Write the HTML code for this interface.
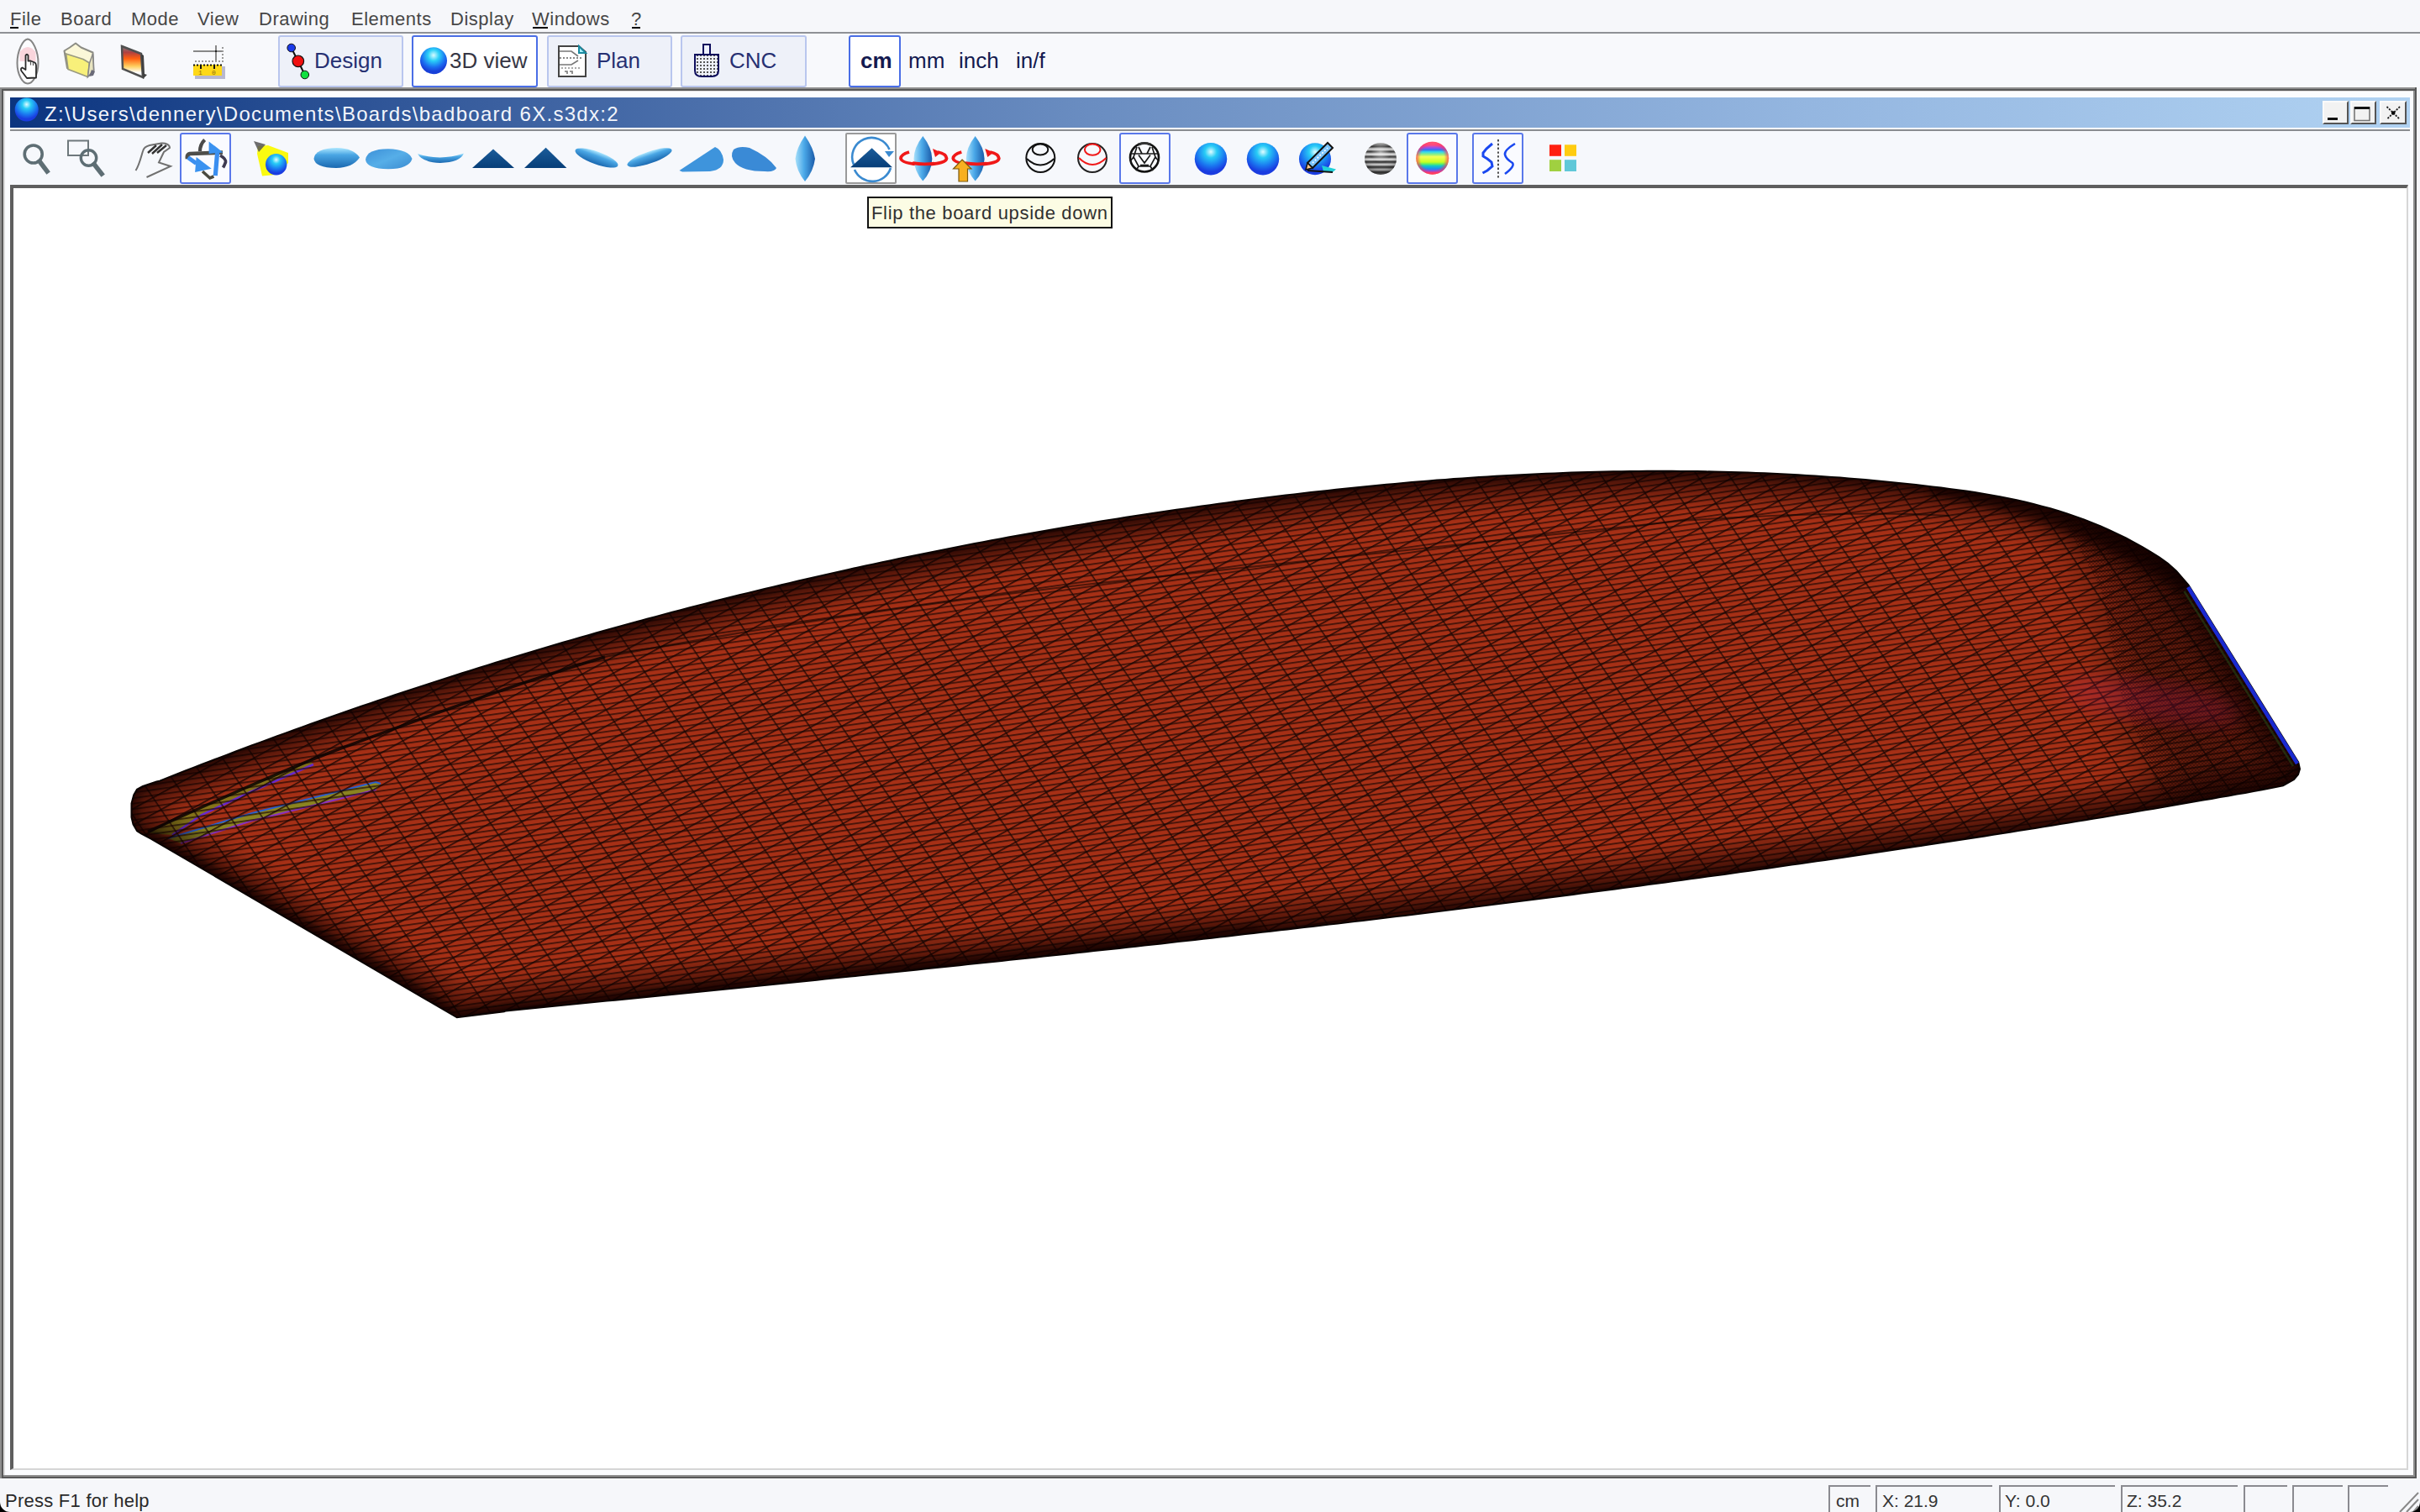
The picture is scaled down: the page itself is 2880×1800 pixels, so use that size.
<!DOCTYPE html>
<html><head><meta charset="utf-8">
<style>
*{margin:0;padding:0;box-sizing:border-box}
html,body{width:2880px;height:1800px;overflow:hidden;background:#f6f7fa;font-family:"Liberation Sans",sans-serif}
.a{position:absolute}
.t{position:absolute;white-space:pre;line-height:1}
.mi{font-size:22px;color:#464646;top:12px;letter-spacing:0.5px}
.tb{font-size:26px;top:59px}
.btn{position:absolute;top:42px;height:62px;border:2px solid #b9c6ee;border-radius:3px;background:#eef1f9}
.btn.sel{border-color:#4a6ee6;background:#fff}
.ib{position:absolute;top:158px;width:61px;height:61px;border:2px solid #5a78ea;border-radius:3px;background:#fafbff}
svg{position:absolute;overflow:visible}
</style></head>
<body>
<!-- MENU BAR -->
<div class="a" style="left:0;top:0;width:2880px;height:38px;background:#f6f7fa"></div>
<div class="a" style="left:0;top:38px;width:2880px;height:2px;background:#8f9196"></div>
<div class="t mi" style="left:12px">File</div>
<div class="a" style="left:12px;top:32px;width:10px;height:2px;background:#000"></div>
<div class="t mi" style="left:72px">Board</div>
<div class="t mi" style="left:156px">Mode</div>
<div class="t mi" style="left:235px">View</div>
<div class="t mi" style="left:308px">Drawing</div>
<div class="t mi" style="left:418px">Elements</div>
<div class="t mi" style="left:536px">Display</div>
<div class="t mi" style="left:633px">Windows</div>
<div class="a" style="left:634px;top:32px;width:18px;height:2px;background:#000"></div>
<div class="t mi" style="left:751px">?</div>
<div class="a" style="left:752px;top:32px;width:10px;height:2px;background:#000"></div>

<!-- TOOLBAR 1 -->
<div class="a" style="left:0;top:40px;width:2880px;height:64px;background:#f8f9fc"></div>

<div class="btn" style="left:331px;width:149px"></div>
<div class="btn sel" style="left:490px;width:150px"></div>
<div class="btn" style="left:651px;width:149px"></div>
<div class="btn" style="left:810px;width:150px"></div>
<div class="btn sel" style="left:1010px;width:62px"></div>

<div class="t tb" style="left:374px;color:#263072">Design</div>
<div class="t tb" style="left:535px;color:#363644">3D view</div>
<div class="t tb" style="left:710px;color:#263072">Plan</div>
<div class="t tb" style="left:868px;color:#263072">CNC</div>
<div class="t tb" style="left:1024px;color:#141a50;font-weight:bold">cm</div>
<div class="t tb" style="left:1081px;color:#141a50">mm</div>
<div class="t tb" style="left:1141px;color:#141a50">inch</div>
<div class="t tb" style="left:1209px;color:#141a50">in/f</div>

<!-- TOOLBAR 1 ICONS -->
<svg style="left:0;top:0" width="1300" height="110" viewBox="0 0 1300 110">
  <defs>
    <radialGradient id="sph" cx="0.5" cy="0.3" r="0.6">
      <stop offset="0" stop-color="#d8fbff"/>
      <stop offset="0.35" stop-color="#2ad0f8"/>
      <stop offset="0.75" stop-color="#1a6cf0"/>
      <stop offset="1" stop-color="#1840d8"/>
    </radialGradient>
    <linearGradient id="fire" x1="0" y1="0" x2="0" y2="1">
      <stop offset="0" stop-color="#808080"/>
      <stop offset="0.2" stop-color="#b04040"/>
      <stop offset="0.4" stop-color="#ff6010"/>
      <stop offset="0.65" stop-color="#ffd060"/>
      <stop offset="0.85" stop-color="#ffffff"/>
      <stop offset="1" stop-color="#e0e0e0"/>
    </linearGradient>
    <pattern id="dots4" width="4" height="4" patternUnits="userSpaceOnUse">
      <rect x="1" y="1" width="2" height="2" fill="#555"/>
    </pattern>
  </defs>
  <!-- surfboard with hand -->
  <path d="M33 46.5 C38.5 47 45.5 60 45.5 75 C45.5 89 39 99.5 33 99.5 C27 99.5 20.5 89 20.5 75 C20.5 60 27.5 47 33 46.5 Z" fill="#fcfcfe" stroke="#858585" stroke-width="2"/>
  <path d="M23.5 62 Q33 50 42.5 62 L42.5 73 L23.5 73 Z" fill="#f8c8d0" opacity="0.75"/>
  <path d="M30.5 66 Q32 63.5 33.5 66 L33.5 72.5 L36.5 72.5 L39 73.5 L41.5 74.5 Q43 76 43 78 L43 92.5 L32 93 L25.5 84.5 Q24 81.5 26.5 80.5 L30.5 83 Z" fill="#fff" stroke="#2a2a2a" stroke-width="1.8" stroke-linejoin="round"/>
  <path d="M36.5 77.5 L36.5 73 M39.5 78 L39.5 74" stroke="#555" stroke-width="1.2"/>
  <!-- folder -->
  <path d="M76.5 60.5 L83 56.5 L90 51.5 L96.5 56.5 L110.5 62.5 L111.5 84 L105 90 L80 81 Z" fill="#fbf7d8" stroke="#8c8c84" stroke-width="2" stroke-linejoin="round"/>
  <path d="M78.5 64 L99 70.5 L106.5 75 L104.5 91.5 L81 82.5 Z" fill="#f8f07a" stroke="#9a9a80" stroke-width="1.8" stroke-linejoin="round"/>
  <path d="M106.5 75 L110.5 64 L111.5 84 L104.5 91.5 Z" fill="#e8e4c0" stroke="#888" stroke-width="1.5"/>
  <path d="M109 83 L113 85 L111 90 L106 91" fill="#6a6a78"/>
  <!-- save -->
  <path d="M145 55 L168 64 L170 92 L146 82 Z" fill="url(#fire)" stroke="#505050" stroke-width="2.5"/>
  <path d="M168 64 L171 66 L172 88 L175 89 L170 94 Z" fill="#404040"/>
  <!-- ruler -->
  <line x1="230" y1="61" x2="266" y2="61" stroke="#888" stroke-width="2"/>
  <line x1="257" y1="54" x2="257" y2="74" stroke="#888" stroke-width="2"/>
  <rect x="256" y="60" width="2" height="2" fill="#222"/>
  <line x1="232" y1="73" x2="266" y2="73" stroke="#999" stroke-width="2" stroke-dasharray="2 2"/>
  <line x1="265" y1="56" x2="265" y2="73" stroke="#999" stroke-width="2" stroke-dasharray="2 2"/>
  <rect x="232" y="79" width="36" height="15" fill="#b8b8d0"/>
  <rect x="230" y="77" width="34" height="13" fill="#ffd818"/>
  <line x1="230" y1="77.5" x2="265" y2="77.5" stroke="#111" stroke-width="2" stroke-dasharray="2 2"/>
  <rect x="238" y="77" width="2" height="5" fill="#111"/>
  <rect x="254" y="77" width="2" height="5" fill="#111"/>
  <text x="236" y="89" font-size="8" fill="#8a6a10" font-family="Liberation Mono">1</text>
  <text x="252" y="89" font-size="8" fill="#8a6a10" font-family="Liberation Mono">0</text>
  <!-- design -->
  <line x1="346.7" y1="57" x2="362.8" y2="89" stroke="#111" stroke-width="2"/>
  <circle cx="346.7" cy="57" r="4.8" fill="#1a3ae8" stroke="#111" stroke-width="1"/>
  <circle cx="354.8" cy="72.8" r="6.8" fill="#f01010" stroke="#111" stroke-width="1.2"/>
  <circle cx="362.8" cy="89" r="4.8" fill="#10e040" stroke="#111" stroke-width="1"/>
  <!-- 3d sphere -->
  <circle cx="516" cy="72.2" r="16" fill="url(#sph)"/>
  <!-- plan doc -->
  <path d="M665 55 L689 55 L697 62 L697 91 L665 91 Z" fill="#fff" stroke="#444" stroke-width="2"/>
  <path d="M689 55 L689 63 L697 63 Z" fill="#a8f0ff" stroke="#1a8aa0" stroke-width="2"/>
  <path d="M666 61 L680 61 L688 67 M666 77 L680 77 L688 72" fill="none" stroke="#777" stroke-width="1.6"/>
  <line x1="666" y1="69" x2="692" y2="69" stroke="#888" stroke-width="2" stroke-dasharray="2 2"/>
  <line x1="668" y1="81" x2="692" y2="81" stroke="#aaa" stroke-width="2" stroke-dasharray="2 2"/>
  <path d="M672 85 h3 v3 M678 85 h3 v3" fill="none" stroke="#777" stroke-width="1.6"/>
  <!-- cnc -->
  <rect x="837" y="53" width="8" height="12" fill="#eef2ff" stroke="#0c0c5c" stroke-width="2"/>
  <path d="M827 65 L855 65 L855 84 Q855 91 847 91 L835 91 Q827 91 827 84 Z" fill="url(#dots4)" stroke="#0c0c5c" stroke-width="2"/>
</svg>

<!-- OUTER FRAME -->
<div class="a" style="left:4px;top:108px;width:2868px;height:1648px;background:#fbfcfe;border-top:1px solid #e2e0e0;border-left:2px solid #dcdcdc"></div>
<div class="a" style="left:0;top:104px;width:2876px;height:2px;background:#8e8e8e"></div>
<div class="a" style="left:2px;top:106px;width:2872px;height:2px;background:#585858"></div>
<div class="a" style="left:0;top:104px;width:2px;height:1656px;background:#8e8e8e"></div>
<div class="a" style="left:2px;top:106px;width:2px;height:1652px;background:#585858"></div>
<div class="a" style="left:4px;top:1756px;width:2870px;height:2px;background:#8e8e8e"></div>
<div class="a" style="left:2px;top:1758px;width:2874px;height:2px;background:#585858"></div>
<div class="a" style="left:2872px;top:108px;width:2px;height:1650px;background:#8e8e8e"></div>
<div class="a" style="left:2874px;top:104px;width:2px;height:1656px;background:#585858"></div>

<!-- TITLE BAR -->
<div class="a" style="left:12px;top:116px;width:2856px;height:36px;background:linear-gradient(90deg,#0b347f 0%,#3a5f9f 20%,#6a8dc1 45%,#94b6e0 75%,#b0d2f2 100%)"></div>
<div class="a" style="left:12px;top:154px;width:2856px;height:2px;background:#8a8c90"></div>
<div class="t" id="title" style="left:53px;top:124px;font-size:24px;color:#f2f5fb;letter-spacing:1.3px">Z:\Users\dennery\Documents\Boards\badboard 6X.s3dx:2</div>


<!-- title buttons -->
<div class="a" style="left:2764px;top:120px;width:31px;height:28px;background:#f2f2f2;border:2px solid;border-color:#fafafa #555 #555 #fafafa"></div>
<div class="a" style="left:2797px;top:120px;width:31px;height:28px;background:#f2f2f2;border:2px solid;border-color:#fafafa #555 #555 #fafafa"></div>
<div class="a" style="left:2832px;top:120px;width:32px;height:28px;background:#f2f2f2;border:2px solid;border-color:#fafafa #555 #555 #fafafa"></div>
<svg style="left:0;top:0" width="2880" height="160" viewBox="0 0 2880 160">
  <rect x="2770" y="140" width="12" height="3" fill="#111"/>
  <rect x="2802" y="128" width="18" height="15.5" fill="none" stroke="#777" stroke-width="1.6"/>
  <rect x="2802" y="127" width="18" height="3" fill="#111"/>
  <path d="M2840.5 127 L2856 142 M2856 127 L2840.5 142" stroke="#222" stroke-width="1.8" stroke-dasharray="2.2 1.4"/><circle cx="2848.2" cy="134.5" r="2.2" fill="#000"/>
</svg>

<!-- TOOLBAR 2 -->
<div class="a" style="left:12px;top:156px;width:2856px;height:64px;background:#f6f8fc"></div>

<!-- selected/hover buttons -->
<div class="ib" style="left:214px"></div>
<div class="a" style="left:1006px;top:158px;width:61px;height:61px;border:2px solid #9a9a9a;border-radius:2px;background:#fff"></div>
<div class="ib" style="left:1332px"></div>
<div class="ib" style="left:1674px"></div>
<div class="ib" style="left:1752px"></div>

<!-- TOOLBAR 2 ICONS -->
<svg style="left:0;top:0" width="1900" height="230" viewBox="0 0 1900 230">
  <defs>
    <linearGradient id="lensg" x1="0" y1="0" x2="1" y2="0">
      <stop offset="0" stop-color="#a8e0fa"/>
      <stop offset="0.45" stop-color="#4aa8e8"/>
      <stop offset="1" stop-color="#1a5aa8"/>
    </linearGradient>
    <linearGradient id="ellg" x1="0" y1="0" x2="0" y2="1">
      <stop offset="0" stop-color="#aee8ff"/>
      <stop offset="0.35" stop-color="#4aa6e4"/>
      <stop offset="1" stop-color="#1a68b0"/>
    </linearGradient>
    <linearGradient id="ellg2" x1="0" y1="0" x2="1" y2="1">
      <stop offset="0" stop-color="#3c90d8"/>
      <stop offset="0.5" stop-color="#56aee8"/>
      <stop offset="1" stop-color="#3a8ad0"/>
    </linearGradient>
    <linearGradient id="trig" x1="0" y1="0" x2="0" y2="1">
      <stop offset="0" stop-color="#1a5c9a"/>
      <stop offset="1" stop-color="#073e78"/>
    </linearGradient>
    <radialGradient id="sph2" cx="0.5" cy="0.28" r="0.62">
      <stop offset="0" stop-color="#e0fcff"/>
      <stop offset="0.3" stop-color="#28ccf6"/>
      <stop offset="0.7" stop-color="#1a78f0"/>
      <stop offset="1" stop-color="#1a3ce0"/>
    </radialGradient>
    <linearGradient id="rainbow" x1="0" y1="0" x2="0" y2="1">
      <stop offset="0" stop-color="#ff9090"/>
      <stop offset="0.1" stop-color="#ff5088"/>
      <stop offset="0.19" stop-color="#9050f0"/>
      <stop offset="0.25" stop-color="#3078f0"/>
      <stop offset="0.31" stop-color="#30d8f0"/>
      <stop offset="0.39" stop-color="#90f080"/>
      <stop offset="0.46" stop-color="#f4ff58"/>
      <stop offset="0.62" stop-color="#c8ff20"/>
      <stop offset="0.68" stop-color="#60f060"/>
      <stop offset="0.74" stop-color="#10c8c8"/>
      <stop offset="0.83" stop-color="#2088f0"/>
      <stop offset="0.9" stop-color="#8050f0"/>
      <stop offset="0.95" stop-color="#ff4070"/>
      <stop offset="1" stop-color="#ff5050"/>
    </linearGradient>
    <radialGradient id="rimred" cx="0.5" cy="0.5" r="0.5">
      <stop offset="0.72" stop-color="#ff3060" stop-opacity="0"/>
      <stop offset="0.92" stop-color="#ff3060" stop-opacity="0.55"/>
      <stop offset="1" stop-color="#ff4060" stop-opacity="0.8"/>
    </radialGradient>
    <radialGradient id="shade3d" cx="0.5" cy="0.3" r="0.7">
      <stop offset="0" stop-color="#fff" stop-opacity="0.55"/>
      <stop offset="0.45" stop-color="#fff" stop-opacity="0"/>
      <stop offset="0.8" stop-color="#000" stop-opacity="0.15"/>
      <stop offset="1" stop-color="#000" stop-opacity="0.4"/>
    </radialGradient>
    <linearGradient id="stripes" x1="0" y1="0" x2="0" y2="1">
      <stop offset="0" stop-color="#bbb"/><stop offset="0.12" stop-color="#333"/>
      <stop offset="0.2" stop-color="#ddd"/><stop offset="0.28" stop-color="#333"/>
      <stop offset="0.36" stop-color="#eee"/><stop offset="0.44" stop-color="#333"/>
      <stop offset="0.52" stop-color="#eee"/><stop offset="0.6" stop-color="#222"/>
      <stop offset="0.68" stop-color="#ddd"/><stop offset="0.76" stop-color="#222"/>
      <stop offset="0.84" stop-color="#ccc"/><stop offset="0.92" stop-color="#333"/>
      <stop offset="1" stop-color="#999"/>
    </linearGradient>
  </defs>
  <!-- title sphere -->
  <circle cx="31.7" cy="130.5" r="14" fill="url(#sph2)"/>
  <!-- magnifier -->
  <circle cx="39.7" cy="183.5" r="10.5" fill="none" stroke="#5e6e74" stroke-width="3.6"/>
  <line x1="47" y1="192" x2="56" y2="204" stroke="#5e6e74" stroke-width="5.5" stroke-linecap="square"/>
  <!-- zoom box -->
  <rect x="81" y="167.5" width="24" height="17.5" fill="none" stroke="#6e787c" stroke-width="2"/>
  <circle cx="105.5" cy="188" r="9.2" fill="none" stroke="#5e6e74" stroke-width="3.4"/>
  <line x1="112" y1="195.5" x2="121" y2="207" stroke="#5e6e74" stroke-width="5.5" stroke-linecap="square"/>
  <!-- hand -->
  <path d="M161.5 203 C166 196 168 186 170 180 C171 176 174 174 178 173 L192 170.5 C197 170 202 172 202 176 L195 181 L189 193.5 L203 198 L174.5 211" fill="none" stroke="#707070" stroke-width="2"/>
  <path d="M176 182 L186 173 M181 183 L193 172 M187 182 L198 173" stroke="#333" stroke-width="2.4"/>
  <!-- rotate icon -->
  <path d="M243.6 166.5 Q238 172 238 180" fill="none" stroke="#4a4a4a" stroke-width="4.2"/>
  <path d="M223 189 Q222 184 226 183 L265 181.5" fill="none" stroke="#4e4e4a" stroke-width="4.6"/>
  <path d="M262 185 Q269 189 268.5 193 Q267 197 265.5 199.5" fill="none" stroke="#3e3a50" stroke-width="3.6"/>
  <path d="M241 204 L249.8 212 L254.4 210" fill="none" stroke="#4a4a40" stroke-width="3.6"/>
  <path d="M223.7 187.5 L233.6 194.5" stroke="#3a8ef0" stroke-width="5"/>
  <path d="M233.6 186.9 L251.7 200.7 L232.1 204.9 Z" fill="#3a92f0"/>
  <path d="M256.3 209.1 L258.6 181.5" stroke="#3a8ef0" stroke-width="5.2"/>
  <path d="M248.6 168.4 L265.5 181.5 L248.6 183 Z" fill="#3a92f0"/>
  <!-- light -->
  <path d="M307 174 L319 173 L343 182 L343 194 L328 208 L312 209.5 L306 183 Z" fill="#fafa10"/>
  <path d="M302 168 L316 172 L308 181 Z" fill="#555" opacity="0.85"/>
  <circle cx="328.7" cy="195.8" r="12.7" fill="url(#sph2)"/>
  <!-- ellipses -->
  <path d="M373.5 189 Q375 176.5 401 176 Q421 176.5 428 187.5 Q420 199.5 400 200 Q375 199.5 373.5 189 Z" fill="url(#ellg)"/>
  <path d="M435 190 Q436.5 177.5 462 177.3 Q486 177.8 490.5 189 Q487 201 462 201.3 Q436.5 201 435 190 Z" fill="url(#ellg2)"/>
  <path d="M497 183 Q524 192 552 182.5 Q548 193 524 194 Q502 193 497 183 Z" fill="url(#ellg)"/>
  <path d="M562 200 L587 177.5 L612 200 Z" fill="url(#trig)"/>
  <path d="M624 200 L649.6 175.8 L674.4 200 Z" fill="url(#trig)"/>
  <ellipse cx="710" cy="188" rx="27" ry="7.5" transform="rotate(20 710 188)" fill="url(#ellg)"/>
  <ellipse cx="773" cy="187.5" rx="28" ry="7" transform="rotate(-19 773 187.5)" fill="url(#ellg)"/>
  <path d="M808.5 203 L851 175 Q859 178 861 190 Q861 202 845 204 L812 204.5 Z" fill="#3e94dc"/>
  <path d="M873 178 Q880 173 892 176 Q914 186 924 200 Q922 205 910 204 Q884 204 875 194 Q868 186 873 178 Z" fill="#3a8ad6"/>
  <path d="M958 161.5 Q948 176 946.5 189 Q948 204 958 216 Q968 204 970 189 Q968 176 958 161.5 Z" fill="url(#lensg)"/>
  <!-- flip -->
  <path d="M1016 196 A23 23 0 1 1 1058.5 178" fill="none" stroke="#3a8ad0" stroke-width="2.6"/>
  <path d="M1053 180 L1064 180 L1058 187 Z" fill="#3a8ad0"/>
  <path d="M1060 200 A23 23 0 0 1 1017 202" fill="none" stroke="#3a8ad0" stroke-width="2.6"/>
  <path d="M1012 199.3 L1037.6 176.2 L1062 199.3 Z" fill="url(#trig)"/>
  <!-- rotate lenses -->
  <path d="M1082.0 181 Q1072.0 184 1072.0 188.5 Q1073.0 195 1099.0 196 Q1126.0 195 1126.5 188.5 Q1126.0 183 1116.0 181" fill="none" stroke="#f01818" stroke-width="3.8"/>
  <path d="M1110.0 177 L1120.0 181.5 L1113.0 187 Z" fill="#f01818"/>
  <path d="M1098.3 162 Q1087.5 176 1087.5 189 Q1088.0 204 1098.3 215.5 Q1109.0 204 1109.3 189 Q1109.0 176 1098.3 162 Z" fill="url(#lensg)"/>
  <path d="M1086.0 194.2 Q1099.0 196.3 1112.0 194.6" fill="none" stroke="#f01818" stroke-width="3.8"/>
  <path d="M1144.3 181 Q1134.3 184 1134.3 188.5 Q1135.3 195 1161.3 196 Q1188.3 195 1188.8 188.5 Q1188.3 183 1178.3 181" fill="none" stroke="#f01818" stroke-width="3.8"/>
  <path d="M1172.3 177 L1182.3 181.5 L1175.3 187 Z" fill="#f01818"/>
  <path d="M1160.6 162 Q1149.8 176 1149.8 189 Q1150.3 204 1160.6 215.5 Q1171.3 204 1171.6 189 Q1171.3 176 1160.6 162 Z" fill="url(#lensg)"/>
  <path d="M1148.3 194.2 Q1161.3 196.3 1174.3 194.6" fill="none" stroke="#f01818" stroke-width="3.8"/>
  <path d="M1145 190 L1156 201 L1151.5 201 L1151.5 216 L1141 216 L1141 201 L1134.5 201 Z" fill="#f8b020" stroke="#7a5a10" stroke-width="1.2"/>
  <!-- bowls -->
  <circle cx="1238.3" cy="188" r="17" fill="none" stroke="#111" stroke-width="2"/>
  <ellipse cx="1238" cy="178" rx="9.3" ry="6.6" fill="none" stroke="#111" stroke-width="2"/>
  <path d="M1222 189 Q1238 204 1254.5 189" fill="none" stroke="#111" stroke-width="2"/>
  <circle cx="1300" cy="188" r="17" fill="none" stroke="#222" stroke-width="2"/>
  <ellipse cx="1300.2" cy="178.2" rx="9.3" ry="6.6" fill="none" stroke="#f01818" stroke-width="2"/>
  <path d="M1284 188 Q1300 204 1316.5 188" fill="none" stroke="#f01818" stroke-width="2"/>
  <!-- wireframe ball -->
  <circle cx="1362" cy="187.5" r="17" fill="none" stroke="#111" stroke-width="2.6"/>
  <path d="M1355 172 Q1362 169 1369 172" fill="none" stroke="#333" stroke-width="3"/>
  <path d="M1346 183 L1378 183 M1355 184.5 L1362 194 L1369 184.5 M1353 175 L1349 187 L1355 198 L1369 198 L1375 187 L1371 175 M1357 196.5 L1367 196.5 M1355 175 L1359 183 M1369 175 L1365 183 M1349 187 L1345 192 M1375 187 L1379 192 M1355 198 L1352 203 M1369 198 L1372 203" fill="none" stroke="#1a1a1a" stroke-width="1.7"/>
  <!-- spheres -->
  <circle cx="1441" cy="189.2" r="19.2" fill="url(#sph2)"/>
  <circle cx="1503" cy="189.2" r="19.2" fill="url(#sph2)"/>
  <circle cx="1565" cy="189.2" r="19" fill="url(#sph2)"/>
  <path d="M1573 197 L1590 201.5 L1586 205 L1575 204 Z" fill="#20d0d8"/>
  <path d="M1556 203 L1586 205" stroke="#111" stroke-width="2"/>
  <path d="M1556 194 L1580 170 L1586 176 L1562 200 Z" fill="#7ac4ff" stroke="#111" stroke-width="2"/>
  <path d="M1556 194 L1562 200 L1554 202 Z" fill="#ffc890" stroke="#111" stroke-width="1.5"/>
  <line x1="1562" y1="194" x2="1580" y2="176" stroke="#fff" stroke-width="1.6" stroke-dasharray="2 2"/>
  <circle cx="1643" cy="189" r="19" fill="url(#stripes)"/><circle cx="1643" cy="189" r="19" fill="url(#shade3d)"/>
  <circle cx="1704.7" cy="188.2" r="19.5" fill="url(#rainbow)"/><circle cx="1704.7" cy="188.2" r="19.5" fill="url(#rimred)"/>
  <!-- S|S -->
  <path d="M1776 171 L1769 177 L1765 182 L1765 186 L1770 189 L1775 193 L1776 198 L1770 203 L1764.5 206" fill="none" stroke="#1a48f0" stroke-width="3" stroke-linejoin="miter"/>
  <line x1="1783" y1="166" x2="1783" y2="212" stroke="#222" stroke-width="1.6" stroke-dasharray="2.4 2.4"/>
  <path d="M1803 171 Q1790 179 1791 184 Q1792 189 1800 194 Q1803 198 1791 207" fill="none" stroke="#1a48f0" stroke-width="2.6"/>
  <!-- color squares -->
  <rect x="1844" y="172.3" width="14" height="13.5" fill="#ff2010"/>
  <rect x="1862" y="172.3" width="14" height="13.5" fill="#ffcc10"/>
  <rect x="1844" y="190.2" width="14" height="13.8" fill="#a0d040"/>
  <rect x="1862" y="190.2" width="14" height="13.8" fill="#60c8d8"/>
</svg>

<!-- VIEWPORT -->
<div class="a" style="left:12px;top:220px;width:2854px;height:1530px;background:#fff;border-left:4px solid #5e5e5e;border-top:4px solid #5e5e5e;border-right:2px solid #d6d6d6;border-bottom:2px solid #d6d6d6"></div>


<!-- BOARD -->
<svg style="left:0;top:0" width="2880" height="1800" viewBox="0 0 2880 1800">
  <defs>
    <pattern id="pA" width="17" height="17" patternUnits="userSpaceOnUse" patternTransform="rotate(-29)">
      <rect y="0" width="17" height="1.7" fill="#1a0603"/>
    </pattern>
    <pattern id="pB" width="31.6" height="31.6" patternUnits="userSpaceOnUse" patternTransform="rotate(56)">
      <rect y="0" width="31.6" height="1.6" fill="#1a0603"/>
    </pattern>
    <pattern id="pC" width="6.5" height="6.5" patternUnits="userSpaceOnUse" patternTransform="rotate(-8)">
      <rect y="0" width="6.5" height="2" fill="#1a0603"/>
    </pattern>
    <pattern id="pD" width="4" height="4" patternUnits="userSpaceOnUse">
      <rect width="2" height="2" fill="#120403"/><rect x="2" y="2" width="2" height="2" fill="#120403"/>
    </pattern>
    <clipPath id="bclip"><path d="M170.0 935.9 L186.3 930.5 L190.0 929.6 L200.0 925.6 L210.0 921.7 L220.0 917.8 L230.0 913.9 L240.0 910.0 L250.0 906.2 L260.0 902.4 L270.0 898.6 L280.0 894.8 L290.0 891.0 L300.0 887.3 L310.0 883.6 L320.0 879.9 L330.0 876.2 L340.0 872.6 L350.0 869.0 L360.0 865.4 L370.0 861.8 L380.0 858.3 L390.0 854.7 L400.0 851.2 L410.0 847.7 L420.0 844.3 L430.0 840.8 L440.0 837.4 L450.0 834.0 L460.0 830.7 L470.0 827.3 L480.0 824.0 L490.0 820.7 L500.0 817.4 L510.0 814.1 L520.0 810.9 L530.0 807.7 L540.0 804.5 L550.0 801.3 L560.0 798.1 L570.0 795.0 L580.0 791.9 L590.0 788.8 L600.0 785.7 L610.0 782.7 L620.0 779.6 L630.0 776.6 L640.0 773.6 L650.0 770.7 L660.0 767.7 L670.0 764.8 L680.0 761.9 L690.0 759.0 L700.0 756.2 L710.0 753.3 L720.0 750.5 L730.0 747.7 L740.0 745.0 L750.0 742.2 L760.0 739.5 L770.0 736.8 L780.0 734.1 L790.0 731.4 L800.0 728.8 L810.0 726.1 L820.0 723.5 L830.0 721.0 L840.0 718.4 L850.0 715.8 L860.0 713.3 L870.0 710.8 L880.0 708.3 L890.0 705.9 L900.0 703.4 L910.0 701.0 L920.0 698.6 L930.0 696.2 L940.0 693.9 L950.0 691.5 L960.0 689.2 L970.0 686.9 L980.0 684.7 L990.0 682.4 L1000.0 680.2 L1010.0 677.9 L1020.0 675.7 L1030.0 673.6 L1040.0 671.4 L1050.0 669.3 L1060.0 667.2 L1070.0 665.1 L1080.0 663.0 L1090.0 660.9 L1100.0 658.9 L1110.0 656.9 L1120.0 654.9 L1130.0 652.9 L1140.0 650.9 L1150.0 649.0 L1160.0 647.1 L1170.0 645.2 L1180.0 643.3 L1190.0 641.4 L1200.0 639.6 L1210.0 637.8 L1220.0 636.0 L1230.0 634.2 L1240.0 632.4 L1250.0 630.7 L1260.0 629.0 L1270.0 627.3 L1280.0 625.6 L1290.0 623.9 L1300.0 622.2 L1310.0 620.6 L1320.0 619.0 L1330.0 617.4 L1340.0 615.8 L1350.0 614.3 L1360.0 612.8 L1370.0 611.2 L1380.0 609.8 L1390.0 608.3 L1400.0 606.8 L1410.0 605.4 L1420.0 604.0 L1430.0 602.6 L1440.0 601.2 L1450.0 599.8 L1460.0 598.5 L1470.0 597.1 L1480.0 595.8 L1490.0 594.5 L1500.0 593.3 L1510.0 592.0 L1520.0 590.8 L1530.0 589.6 L1540.0 588.4 L1550.0 587.2 L1560.0 586.1 L1570.0 585.0 L1580.0 583.9 L1590.0 582.8 L1600.0 581.7 L1610.0 580.7 L1620.0 579.7 L1630.0 578.7 L1640.0 577.7 L1650.0 576.8 L1660.0 575.9 L1670.0 575.0 L1680.0 574.1 L1690.0 573.3 L1700.0 572.4 L1710.0 571.6 L1720.0 570.9 L1730.0 570.1 L1740.0 569.4 L1750.0 568.7 L1760.0 568.1 L1770.0 567.4 L1780.0 566.8 L1790.0 566.2 L1800.0 565.7 L1810.0 565.2 L1820.0 564.7 L1830.0 564.2 L1840.0 563.8 L1850.0 563.4 L1860.0 563.0 L1870.0 562.6 L1880.0 562.3 L1890.0 562.0 L1900.0 561.8 L1910.0 561.5 L1920.0 561.3 L1930.0 561.2 L1940.0 561.0 L1950.0 560.9 L1960.0 560.8 L1970.0 560.8 L1980.0 560.8 L1990.0 560.8 L2000.0 560.9 L2010.0 561.0 L2020.0 561.1 L2030.0 561.3 L2040.0 561.5 L2050.0 561.7 L2060.0 561.9 L2070.0 562.2 L2080.0 562.6 L2090.0 562.9 L2100.0 563.3 L2110.0 563.8 L2120.0 564.3 L2130.0 564.8 L2140.0 565.3 L2150.0 565.9 L2160.0 566.5 L2170.0 567.2 L2180.0 567.9 L2190.0 568.6 L2200.0 569.4 L2210.0 570.2 L2220.0 571.1 L2230.0 572.0 L2240.0 572.9 L2250.0 573.9 L2260.0 574.9 L2270.0 576.0 L2280.0 577.1 L2290.0 578.2 L2300.0 579.4 L2310.0 580.6 L2320.0 581.9 L2330.0 583.2 L2340.0 584.6 L2350.0 586.1 L2360.0 587.7 L2370.0 589.4 L2380.0 591.2 L2390.0 593.2 L2400.0 595.3 L2410.0 597.5 L2420.0 600.0 L2430.0 602.6 L2440.0 605.3 L2450.0 608.3 L2460.0 611.5 L2470.0 614.9 L2480.0 618.5 L2490.0 622.4 L2500.0 626.5 L2510.0 630.9 L2520.0 635.6 L2530.0 640.5 L2540.0 645.8 L2550.0 651.4 L2560.0 657.3 L2570.0 663.6 L2580.0 670.8 L2590.0 679.7 L2604.4 696.3 L2735.2 907.3 L2737.0 915.5 L2735.0 922.0 L2730.0 928.0 L2717.0 935.4 L2692.0 940.3 L2682.0 942.1 L2672.0 943.9 L2662.0 945.6 L2652.0 947.4 L2642.0 949.1 L2632.0 950.9 L2622.0 952.6 L2612.0 954.3 L2602.0 956.1 L2592.0 957.8 L2582.0 959.5 L2572.0 961.2 L2562.0 962.9 L2552.0 964.6 L2542.0 966.3 L2532.0 967.9 L2522.0 969.6 L2512.0 971.3 L2502.0 972.9 L2492.0 974.6 L2482.0 976.2 L2472.0 977.8 L2462.0 979.5 L2452.0 981.1 L2442.0 982.7 L2432.0 984.3 L2422.0 985.9 L2412.0 987.5 L2402.0 989.1 L2392.0 990.7 L2382.0 992.2 L2372.0 993.8 L2362.0 995.4 L2352.0 996.9 L2342.0 998.5 L2332.0 1000.0 L2322.0 1001.6 L2312.0 1003.1 L2302.0 1004.6 L2292.0 1006.1 L2282.0 1007.6 L2272.0 1009.1 L2262.0 1010.6 L2252.0 1012.1 L2242.0 1013.6 L2232.0 1015.1 L2222.0 1016.6 L2212.0 1018.1 L2202.0 1019.5 L2192.0 1021.0 L2182.0 1022.4 L2172.0 1023.9 L2162.0 1025.3 L2152.0 1026.8 L2142.0 1028.2 L2132.0 1029.6 L2122.0 1031.1 L2112.0 1032.5 L2102.0 1033.9 L2092.0 1035.3 L2082.0 1036.7 L2072.0 1038.1 L2062.0 1039.5 L2052.0 1040.9 L2042.0 1042.2 L2032.0 1043.6 L2022.0 1045.0 L2012.0 1046.3 L2002.0 1047.7 L1992.0 1049.0 L1982.0 1050.4 L1972.0 1051.7 L1962.0 1053.1 L1952.0 1054.4 L1942.0 1055.7 L1932.0 1057.1 L1922.0 1058.4 L1912.0 1059.7 L1902.0 1061.0 L1892.0 1062.3 L1882.0 1063.6 L1872.0 1064.9 L1862.0 1066.2 L1852.0 1067.5 L1842.0 1068.8 L1832.0 1070.0 L1822.0 1071.3 L1812.0 1072.6 L1802.0 1073.8 L1792.0 1075.1 L1782.0 1076.3 L1772.0 1077.6 L1762.0 1078.8 L1752.0 1080.1 L1742.0 1081.3 L1732.0 1082.6 L1722.0 1083.8 L1712.0 1085.0 L1702.0 1086.2 L1692.0 1087.4 L1682.0 1088.7 L1672.0 1089.9 L1662.0 1091.1 L1652.0 1092.3 L1642.0 1093.5 L1632.0 1094.7 L1622.0 1095.9 L1612.0 1097.0 L1602.0 1098.2 L1592.0 1099.4 L1582.0 1100.6 L1572.0 1101.7 L1562.0 1102.9 L1552.0 1104.1 L1542.0 1105.2 L1532.0 1106.4 L1522.0 1107.5 L1512.0 1108.7 L1502.0 1109.8 L1492.0 1111.0 L1482.0 1112.1 L1472.0 1113.3 L1462.0 1114.4 L1452.0 1115.5 L1442.0 1116.7 L1432.0 1117.8 L1422.0 1118.9 L1412.0 1120.0 L1402.0 1121.1 L1392.0 1122.2 L1382.0 1123.4 L1372.0 1124.5 L1362.0 1125.6 L1352.0 1126.7 L1342.0 1127.8 L1332.0 1128.9 L1322.0 1129.9 L1312.0 1131.0 L1302.0 1132.1 L1292.0 1133.2 L1282.0 1134.3 L1272.0 1135.4 L1262.0 1136.4 L1252.0 1137.5 L1242.0 1138.6 L1232.0 1139.7 L1222.0 1140.7 L1212.0 1141.8 L1202.0 1142.8 L1192.0 1143.9 L1182.0 1145.0 L1172.0 1146.0 L1162.0 1147.1 L1152.0 1148.1 L1142.0 1149.2 L1132.0 1150.2 L1122.0 1151.2 L1112.0 1152.3 L1102.0 1153.3 L1092.0 1154.4 L1082.0 1155.4 L1072.0 1156.4 L1062.0 1157.5 L1052.0 1158.5 L1042.0 1159.5 L1032.0 1160.5 L1022.0 1161.6 L1012.0 1162.6 L1002.0 1163.6 L992.0 1164.6 L982.0 1165.6 L972.0 1166.7 L962.0 1167.7 L952.0 1168.7 L942.0 1169.7 L932.0 1170.7 L922.0 1171.7 L912.0 1172.7 L902.0 1173.7 L892.0 1174.7 L882.0 1175.7 L872.0 1176.7 L862.0 1177.7 L852.0 1178.7 L842.0 1179.7 L832.0 1180.7 L822.0 1181.7 L812.0 1182.7 L802.0 1183.7 L792.0 1184.7 L782.0 1185.7 L772.0 1186.7 L762.0 1187.7 L752.0 1188.7 L742.0 1189.7 L732.0 1190.7 L722.0 1191.6 L712.0 1192.6 L702.0 1193.6 L692.0 1194.6 L682.0 1195.6 L672.0 1196.6 L662.0 1197.6 L652.0 1198.5 L642.0 1199.5 L632.0 1200.5 L622.0 1201.5 L612.0 1202.5 L602.0 1203.4 L600.0 1204.4 L543.8 1211.3 L179.7 998.6 L168.0 992.5 L163.1 989.3 L158.5 981.4 L156.5 972.8 L156.5 956.3 L159.2 946.4 L163.0 939.8 Z"/></clipPath>
    <filter id="blur12" x="-20%" y="-20%" width="140%" height="140%"><feGaussianBlur stdDeviation="12"/></filter>
    <filter id="blur30" x="-50%" y="-50%" width="200%" height="200%"><feGaussianBlur stdDeviation="30"/></filter>
    <filter id="blur4" x="-20%" y="-20%" width="140%" height="140%"><feGaussianBlur stdDeviation="4"/></filter>
  </defs>
  <path d="M170.0 935.9 L186.3 930.5 L190.0 929.6 L200.0 925.6 L210.0 921.7 L220.0 917.8 L230.0 913.9 L240.0 910.0 L250.0 906.2 L260.0 902.4 L270.0 898.6 L280.0 894.8 L290.0 891.0 L300.0 887.3 L310.0 883.6 L320.0 879.9 L330.0 876.2 L340.0 872.6 L350.0 869.0 L360.0 865.4 L370.0 861.8 L380.0 858.3 L390.0 854.7 L400.0 851.2 L410.0 847.7 L420.0 844.3 L430.0 840.8 L440.0 837.4 L450.0 834.0 L460.0 830.7 L470.0 827.3 L480.0 824.0 L490.0 820.7 L500.0 817.4 L510.0 814.1 L520.0 810.9 L530.0 807.7 L540.0 804.5 L550.0 801.3 L560.0 798.1 L570.0 795.0 L580.0 791.9 L590.0 788.8 L600.0 785.7 L610.0 782.7 L620.0 779.6 L630.0 776.6 L640.0 773.6 L650.0 770.7 L660.0 767.7 L670.0 764.8 L680.0 761.9 L690.0 759.0 L700.0 756.2 L710.0 753.3 L720.0 750.5 L730.0 747.7 L740.0 745.0 L750.0 742.2 L760.0 739.5 L770.0 736.8 L780.0 734.1 L790.0 731.4 L800.0 728.8 L810.0 726.1 L820.0 723.5 L830.0 721.0 L840.0 718.4 L850.0 715.8 L860.0 713.3 L870.0 710.8 L880.0 708.3 L890.0 705.9 L900.0 703.4 L910.0 701.0 L920.0 698.6 L930.0 696.2 L940.0 693.9 L950.0 691.5 L960.0 689.2 L970.0 686.9 L980.0 684.7 L990.0 682.4 L1000.0 680.2 L1010.0 677.9 L1020.0 675.7 L1030.0 673.6 L1040.0 671.4 L1050.0 669.3 L1060.0 667.2 L1070.0 665.1 L1080.0 663.0 L1090.0 660.9 L1100.0 658.9 L1110.0 656.9 L1120.0 654.9 L1130.0 652.9 L1140.0 650.9 L1150.0 649.0 L1160.0 647.1 L1170.0 645.2 L1180.0 643.3 L1190.0 641.4 L1200.0 639.6 L1210.0 637.8 L1220.0 636.0 L1230.0 634.2 L1240.0 632.4 L1250.0 630.7 L1260.0 629.0 L1270.0 627.3 L1280.0 625.6 L1290.0 623.9 L1300.0 622.2 L1310.0 620.6 L1320.0 619.0 L1330.0 617.4 L1340.0 615.8 L1350.0 614.3 L1360.0 612.8 L1370.0 611.2 L1380.0 609.8 L1390.0 608.3 L1400.0 606.8 L1410.0 605.4 L1420.0 604.0 L1430.0 602.6 L1440.0 601.2 L1450.0 599.8 L1460.0 598.5 L1470.0 597.1 L1480.0 595.8 L1490.0 594.5 L1500.0 593.3 L1510.0 592.0 L1520.0 590.8 L1530.0 589.6 L1540.0 588.4 L1550.0 587.2 L1560.0 586.1 L1570.0 585.0 L1580.0 583.9 L1590.0 582.8 L1600.0 581.7 L1610.0 580.7 L1620.0 579.7 L1630.0 578.7 L1640.0 577.7 L1650.0 576.8 L1660.0 575.9 L1670.0 575.0 L1680.0 574.1 L1690.0 573.3 L1700.0 572.4 L1710.0 571.6 L1720.0 570.9 L1730.0 570.1 L1740.0 569.4 L1750.0 568.7 L1760.0 568.1 L1770.0 567.4 L1780.0 566.8 L1790.0 566.2 L1800.0 565.7 L1810.0 565.2 L1820.0 564.7 L1830.0 564.2 L1840.0 563.8 L1850.0 563.4 L1860.0 563.0 L1870.0 562.6 L1880.0 562.3 L1890.0 562.0 L1900.0 561.8 L1910.0 561.5 L1920.0 561.3 L1930.0 561.2 L1940.0 561.0 L1950.0 560.9 L1960.0 560.8 L1970.0 560.8 L1980.0 560.8 L1990.0 560.8 L2000.0 560.9 L2010.0 561.0 L2020.0 561.1 L2030.0 561.3 L2040.0 561.5 L2050.0 561.7 L2060.0 561.9 L2070.0 562.2 L2080.0 562.6 L2090.0 562.9 L2100.0 563.3 L2110.0 563.8 L2120.0 564.3 L2130.0 564.8 L2140.0 565.3 L2150.0 565.9 L2160.0 566.5 L2170.0 567.2 L2180.0 567.9 L2190.0 568.6 L2200.0 569.4 L2210.0 570.2 L2220.0 571.1 L2230.0 572.0 L2240.0 572.9 L2250.0 573.9 L2260.0 574.9 L2270.0 576.0 L2280.0 577.1 L2290.0 578.2 L2300.0 579.4 L2310.0 580.6 L2320.0 581.9 L2330.0 583.2 L2340.0 584.6 L2350.0 586.1 L2360.0 587.7 L2370.0 589.4 L2380.0 591.2 L2390.0 593.2 L2400.0 595.3 L2410.0 597.5 L2420.0 600.0 L2430.0 602.6 L2440.0 605.3 L2450.0 608.3 L2460.0 611.5 L2470.0 614.9 L2480.0 618.5 L2490.0 622.4 L2500.0 626.5 L2510.0 630.9 L2520.0 635.6 L2530.0 640.5 L2540.0 645.8 L2550.0 651.4 L2560.0 657.3 L2570.0 663.6 L2580.0 670.8 L2590.0 679.7 L2604.4 696.3 L2735.2 907.3 L2737.0 915.5 L2735.0 922.0 L2730.0 928.0 L2717.0 935.4 L2692.0 940.3 L2682.0 942.1 L2672.0 943.9 L2662.0 945.6 L2652.0 947.4 L2642.0 949.1 L2632.0 950.9 L2622.0 952.6 L2612.0 954.3 L2602.0 956.1 L2592.0 957.8 L2582.0 959.5 L2572.0 961.2 L2562.0 962.9 L2552.0 964.6 L2542.0 966.3 L2532.0 967.9 L2522.0 969.6 L2512.0 971.3 L2502.0 972.9 L2492.0 974.6 L2482.0 976.2 L2472.0 977.8 L2462.0 979.5 L2452.0 981.1 L2442.0 982.7 L2432.0 984.3 L2422.0 985.9 L2412.0 987.5 L2402.0 989.1 L2392.0 990.7 L2382.0 992.2 L2372.0 993.8 L2362.0 995.4 L2352.0 996.9 L2342.0 998.5 L2332.0 1000.0 L2322.0 1001.6 L2312.0 1003.1 L2302.0 1004.6 L2292.0 1006.1 L2282.0 1007.6 L2272.0 1009.1 L2262.0 1010.6 L2252.0 1012.1 L2242.0 1013.6 L2232.0 1015.1 L2222.0 1016.6 L2212.0 1018.1 L2202.0 1019.5 L2192.0 1021.0 L2182.0 1022.4 L2172.0 1023.9 L2162.0 1025.3 L2152.0 1026.8 L2142.0 1028.2 L2132.0 1029.6 L2122.0 1031.1 L2112.0 1032.5 L2102.0 1033.9 L2092.0 1035.3 L2082.0 1036.7 L2072.0 1038.1 L2062.0 1039.5 L2052.0 1040.9 L2042.0 1042.2 L2032.0 1043.6 L2022.0 1045.0 L2012.0 1046.3 L2002.0 1047.7 L1992.0 1049.0 L1982.0 1050.4 L1972.0 1051.7 L1962.0 1053.1 L1952.0 1054.4 L1942.0 1055.7 L1932.0 1057.1 L1922.0 1058.4 L1912.0 1059.7 L1902.0 1061.0 L1892.0 1062.3 L1882.0 1063.6 L1872.0 1064.9 L1862.0 1066.2 L1852.0 1067.5 L1842.0 1068.8 L1832.0 1070.0 L1822.0 1071.3 L1812.0 1072.6 L1802.0 1073.8 L1792.0 1075.1 L1782.0 1076.3 L1772.0 1077.6 L1762.0 1078.8 L1752.0 1080.1 L1742.0 1081.3 L1732.0 1082.6 L1722.0 1083.8 L1712.0 1085.0 L1702.0 1086.2 L1692.0 1087.4 L1682.0 1088.7 L1672.0 1089.9 L1662.0 1091.1 L1652.0 1092.3 L1642.0 1093.5 L1632.0 1094.7 L1622.0 1095.9 L1612.0 1097.0 L1602.0 1098.2 L1592.0 1099.4 L1582.0 1100.6 L1572.0 1101.7 L1562.0 1102.9 L1552.0 1104.1 L1542.0 1105.2 L1532.0 1106.4 L1522.0 1107.5 L1512.0 1108.7 L1502.0 1109.8 L1492.0 1111.0 L1482.0 1112.1 L1472.0 1113.3 L1462.0 1114.4 L1452.0 1115.5 L1442.0 1116.7 L1432.0 1117.8 L1422.0 1118.9 L1412.0 1120.0 L1402.0 1121.1 L1392.0 1122.2 L1382.0 1123.4 L1372.0 1124.5 L1362.0 1125.6 L1352.0 1126.7 L1342.0 1127.8 L1332.0 1128.9 L1322.0 1129.9 L1312.0 1131.0 L1302.0 1132.1 L1292.0 1133.2 L1282.0 1134.3 L1272.0 1135.4 L1262.0 1136.4 L1252.0 1137.5 L1242.0 1138.6 L1232.0 1139.7 L1222.0 1140.7 L1212.0 1141.8 L1202.0 1142.8 L1192.0 1143.9 L1182.0 1145.0 L1172.0 1146.0 L1162.0 1147.1 L1152.0 1148.1 L1142.0 1149.2 L1132.0 1150.2 L1122.0 1151.2 L1112.0 1152.3 L1102.0 1153.3 L1092.0 1154.4 L1082.0 1155.4 L1072.0 1156.4 L1062.0 1157.5 L1052.0 1158.5 L1042.0 1159.5 L1032.0 1160.5 L1022.0 1161.6 L1012.0 1162.6 L1002.0 1163.6 L992.0 1164.6 L982.0 1165.6 L972.0 1166.7 L962.0 1167.7 L952.0 1168.7 L942.0 1169.7 L932.0 1170.7 L922.0 1171.7 L912.0 1172.7 L902.0 1173.7 L892.0 1174.7 L882.0 1175.7 L872.0 1176.7 L862.0 1177.7 L852.0 1178.7 L842.0 1179.7 L832.0 1180.7 L822.0 1181.7 L812.0 1182.7 L802.0 1183.7 L792.0 1184.7 L782.0 1185.7 L772.0 1186.7 L762.0 1187.7 L752.0 1188.7 L742.0 1189.7 L732.0 1190.7 L722.0 1191.6 L712.0 1192.6 L702.0 1193.6 L692.0 1194.6 L682.0 1195.6 L672.0 1196.6 L662.0 1197.6 L652.0 1198.5 L642.0 1199.5 L632.0 1200.5 L622.0 1201.5 L612.0 1202.5 L602.0 1203.4 L600.0 1204.4 L543.8 1211.3 L179.7 998.6 L168.0 992.5 L163.1 989.3 L158.5 981.4 L156.5 972.8 L156.5 956.3 L159.2 946.4 L163.0 939.8 Z" fill="#a63016"/>
  <g clip-path="url(#bclip)">
    <!-- left tip stripes -->
    <path d="M175 992 L250 956 L300 933 L369 905 L373 910 L300 942 L240 970 L205 994 Z" fill="#7c8c1c" opacity="0.75"/>
    <path d="M205 994 L240 970 L300 942 L373 910" fill="none" stroke="#6a2ad0" stroke-width="2.5"/>
    <path d="M200 998 L300 968 L447 931 L453 933 L448 940 L300 977 L215 1004 Z" fill="#82a024" opacity="0.75"/>
    <path d="M200 998 L300 968 L447 931 L453 933" fill="none" stroke="#2a60d0" stroke-width="2"/>
    <path d="M215 1004 L300 977 L448 940" fill="none" stroke="#8a30c0" stroke-width="2"/>
    <rect x="100" y="500" width="2700" height="750" fill="url(#pC)" opacity="0.65"/>
    <rect x="100" y="500" width="2700" height="750" fill="url(#pA)" opacity="0.85"/>
    <rect x="100" y="500" width="2700" height="750" fill="url(#pB)" opacity="0.8"/>
    <!-- right tip dark zone -->
    <path d="M2440 590 L2500 700 L2525 830 L2590 990 L2800 990 L2800 590 Z" fill="#0c0302" opacity="0.45" filter="url(#blur30)"/>
    <path d="M2440 590 L2500 700 L2525 830 L2590 990 L2800 990 L2800 590 Z" fill="url(#pD)" opacity="0.35"/>
    <!-- magenta haze -->
    <ellipse cx="2560" cy="835" rx="110" ry="22" transform="rotate(8 2560 835)" fill="#d02070" opacity="0.2" filter="url(#blur12)"/>
    <!-- edge shading -->
    <path d="M170.0 935.9 L186.3 930.5 L190.0 929.6 L200.0 925.6 L210.0 921.7 L220.0 917.8 L230.0 913.9 L240.0 910.0 L250.0 906.2 L260.0 902.4 L270.0 898.6 L280.0 894.8 L290.0 891.0 L300.0 887.3 L310.0 883.6 L320.0 879.9 L330.0 876.2 L340.0 872.6 L350.0 869.0 L360.0 865.4 L370.0 861.8 L380.0 858.3 L390.0 854.7 L400.0 851.2 L410.0 847.7 L420.0 844.3 L430.0 840.8 L440.0 837.4 L450.0 834.0 L460.0 830.7 L470.0 827.3 L480.0 824.0 L490.0 820.7 L500.0 817.4 L510.0 814.1 L520.0 810.9 L530.0 807.7 L540.0 804.5 L550.0 801.3 L560.0 798.1 L570.0 795.0 L580.0 791.9 L590.0 788.8 L600.0 785.7 L610.0 782.7 L620.0 779.6 L630.0 776.6 L640.0 773.6 L650.0 770.7 L660.0 767.7 L670.0 764.8 L680.0 761.9 L690.0 759.0 L700.0 756.2 L710.0 753.3 L720.0 750.5 L730.0 747.7 L740.0 745.0 L750.0 742.2 L760.0 739.5 L770.0 736.8 L780.0 734.1 L790.0 731.4 L800.0 728.8 L810.0 726.1 L820.0 723.5 L830.0 721.0 L840.0 718.4 L850.0 715.8 L860.0 713.3 L870.0 710.8 L880.0 708.3 L890.0 705.9 L900.0 703.4 L910.0 701.0 L920.0 698.6 L930.0 696.2 L940.0 693.9 L950.0 691.5 L960.0 689.2 L970.0 686.9 L980.0 684.7 L990.0 682.4 L1000.0 680.2 L1010.0 677.9 L1020.0 675.7 L1030.0 673.6 L1040.0 671.4 L1050.0 669.3 L1060.0 667.2 L1070.0 665.1 L1080.0 663.0 L1090.0 660.9 L1100.0 658.9 L1110.0 656.9 L1120.0 654.9 L1130.0 652.9 L1140.0 650.9 L1150.0 649.0 L1160.0 647.1 L1170.0 645.2 L1180.0 643.3 L1190.0 641.4 L1200.0 639.6 L1210.0 637.8 L1220.0 636.0 L1230.0 634.2 L1240.0 632.4 L1250.0 630.7 L1260.0 629.0 L1270.0 627.3 L1280.0 625.6 L1290.0 623.9 L1300.0 622.2 L1310.0 620.6 L1320.0 619.0 L1330.0 617.4 L1340.0 615.8 L1350.0 614.3 L1360.0 612.8 L1370.0 611.2 L1380.0 609.8 L1390.0 608.3 L1400.0 606.8 L1410.0 605.4 L1420.0 604.0 L1430.0 602.6 L1440.0 601.2 L1450.0 599.8 L1460.0 598.5 L1470.0 597.1 L1480.0 595.8 L1490.0 594.5 L1500.0 593.3 L1510.0 592.0 L1520.0 590.8 L1530.0 589.6 L1540.0 588.4 L1550.0 587.2 L1560.0 586.1 L1570.0 585.0 L1580.0 583.9 L1590.0 582.8 L1600.0 581.7 L1610.0 580.7 L1620.0 579.7 L1630.0 578.7 L1640.0 577.7 L1650.0 576.8 L1660.0 575.9 L1670.0 575.0 L1680.0 574.1 L1690.0 573.3 L1700.0 572.4 L1710.0 571.6 L1720.0 570.9 L1730.0 570.1 L1740.0 569.4 L1750.0 568.7 L1760.0 568.1 L1770.0 567.4 L1780.0 566.8 L1790.0 566.2 L1800.0 565.7 L1810.0 565.2 L1820.0 564.7 L1830.0 564.2 L1840.0 563.8 L1850.0 563.4 L1860.0 563.0 L1870.0 562.6 L1880.0 562.3 L1890.0 562.0 L1900.0 561.8 L1910.0 561.5 L1920.0 561.3 L1930.0 561.2 L1940.0 561.0 L1950.0 560.9 L1960.0 560.8 L1970.0 560.8 L1980.0 560.8 L1990.0 560.8 L2000.0 560.9 L2010.0 561.0 L2020.0 561.1 L2030.0 561.3 L2040.0 561.5 L2050.0 561.7 L2060.0 561.9 L2070.0 562.2 L2080.0 562.6 L2090.0 562.9 L2100.0 563.3 L2110.0 563.8 L2120.0 564.3 L2130.0 564.8 L2140.0 565.3 L2150.0 565.9 L2160.0 566.5 L2170.0 567.2 L2180.0 567.9 L2190.0 568.6 L2200.0 569.4 L2210.0 570.2 L2220.0 571.1 L2230.0 572.0 L2240.0 572.9 L2250.0 573.9 L2260.0 574.9 L2270.0 576.0 L2280.0 577.1 L2290.0 578.2 L2300.0 579.4 L2310.0 580.6 L2320.0 581.9 L2330.0 583.2 L2340.0 584.6 L2350.0 586.1 L2360.0 587.7 L2370.0 589.4 L2380.0 591.2 L2390.0 593.2 L2400.0 595.3 L2410.0 597.5 L2420.0 600.0 L2430.0 602.6 L2440.0 605.3 L2450.0 608.3 L2460.0 611.5 L2470.0 614.9 L2480.0 618.5 L2490.0 622.4 L2500.0 626.5 L2510.0 630.9 L2520.0 635.6 L2530.0 640.5 L2540.0 645.8 L2550.0 651.4 L2560.0 657.3 L2570.0 663.6 L2580.0 670.8 L2590.0 679.7 L2604.4 696.3 L2735.2 907.3 L2737.0 915.5 L2735.0 922.0 L2730.0 928.0 L2717.0 935.4 L2692.0 940.3 L2682.0 942.1 L2672.0 943.9 L2662.0 945.6 L2652.0 947.4 L2642.0 949.1 L2632.0 950.9 L2622.0 952.6 L2612.0 954.3 L2602.0 956.1 L2592.0 957.8 L2582.0 959.5 L2572.0 961.2 L2562.0 962.9 L2552.0 964.6 L2542.0 966.3 L2532.0 967.9 L2522.0 969.6 L2512.0 971.3 L2502.0 972.9 L2492.0 974.6 L2482.0 976.2 L2472.0 977.8 L2462.0 979.5 L2452.0 981.1 L2442.0 982.7 L2432.0 984.3 L2422.0 985.9 L2412.0 987.5 L2402.0 989.1 L2392.0 990.7 L2382.0 992.2 L2372.0 993.8 L2362.0 995.4 L2352.0 996.9 L2342.0 998.5 L2332.0 1000.0 L2322.0 1001.6 L2312.0 1003.1 L2302.0 1004.6 L2292.0 1006.1 L2282.0 1007.6 L2272.0 1009.1 L2262.0 1010.6 L2252.0 1012.1 L2242.0 1013.6 L2232.0 1015.1 L2222.0 1016.6 L2212.0 1018.1 L2202.0 1019.5 L2192.0 1021.0 L2182.0 1022.4 L2172.0 1023.9 L2162.0 1025.3 L2152.0 1026.8 L2142.0 1028.2 L2132.0 1029.6 L2122.0 1031.1 L2112.0 1032.5 L2102.0 1033.9 L2092.0 1035.3 L2082.0 1036.7 L2072.0 1038.1 L2062.0 1039.5 L2052.0 1040.9 L2042.0 1042.2 L2032.0 1043.6 L2022.0 1045.0 L2012.0 1046.3 L2002.0 1047.7 L1992.0 1049.0 L1982.0 1050.4 L1972.0 1051.7 L1962.0 1053.1 L1952.0 1054.4 L1942.0 1055.7 L1932.0 1057.1 L1922.0 1058.4 L1912.0 1059.7 L1902.0 1061.0 L1892.0 1062.3 L1882.0 1063.6 L1872.0 1064.9 L1862.0 1066.2 L1852.0 1067.5 L1842.0 1068.8 L1832.0 1070.0 L1822.0 1071.3 L1812.0 1072.6 L1802.0 1073.8 L1792.0 1075.1 L1782.0 1076.3 L1772.0 1077.6 L1762.0 1078.8 L1752.0 1080.1 L1742.0 1081.3 L1732.0 1082.6 L1722.0 1083.8 L1712.0 1085.0 L1702.0 1086.2 L1692.0 1087.4 L1682.0 1088.7 L1672.0 1089.9 L1662.0 1091.1 L1652.0 1092.3 L1642.0 1093.5 L1632.0 1094.7 L1622.0 1095.9 L1612.0 1097.0 L1602.0 1098.2 L1592.0 1099.4 L1582.0 1100.6 L1572.0 1101.7 L1562.0 1102.9 L1552.0 1104.1 L1542.0 1105.2 L1532.0 1106.4 L1522.0 1107.5 L1512.0 1108.7 L1502.0 1109.8 L1492.0 1111.0 L1482.0 1112.1 L1472.0 1113.3 L1462.0 1114.4 L1452.0 1115.5 L1442.0 1116.7 L1432.0 1117.8 L1422.0 1118.9 L1412.0 1120.0 L1402.0 1121.1 L1392.0 1122.2 L1382.0 1123.4 L1372.0 1124.5 L1362.0 1125.6 L1352.0 1126.7 L1342.0 1127.8 L1332.0 1128.9 L1322.0 1129.9 L1312.0 1131.0 L1302.0 1132.1 L1292.0 1133.2 L1282.0 1134.3 L1272.0 1135.4 L1262.0 1136.4 L1252.0 1137.5 L1242.0 1138.6 L1232.0 1139.7 L1222.0 1140.7 L1212.0 1141.8 L1202.0 1142.8 L1192.0 1143.9 L1182.0 1145.0 L1172.0 1146.0 L1162.0 1147.1 L1152.0 1148.1 L1142.0 1149.2 L1132.0 1150.2 L1122.0 1151.2 L1112.0 1152.3 L1102.0 1153.3 L1092.0 1154.4 L1082.0 1155.4 L1072.0 1156.4 L1062.0 1157.5 L1052.0 1158.5 L1042.0 1159.5 L1032.0 1160.5 L1022.0 1161.6 L1012.0 1162.6 L1002.0 1163.6 L992.0 1164.6 L982.0 1165.6 L972.0 1166.7 L962.0 1167.7 L952.0 1168.7 L942.0 1169.7 L932.0 1170.7 L922.0 1171.7 L912.0 1172.7 L902.0 1173.7 L892.0 1174.7 L882.0 1175.7 L872.0 1176.7 L862.0 1177.7 L852.0 1178.7 L842.0 1179.7 L832.0 1180.7 L822.0 1181.7 L812.0 1182.7 L802.0 1183.7 L792.0 1184.7 L782.0 1185.7 L772.0 1186.7 L762.0 1187.7 L752.0 1188.7 L742.0 1189.7 L732.0 1190.7 L722.0 1191.6 L712.0 1192.6 L702.0 1193.6 L692.0 1194.6 L682.0 1195.6 L672.0 1196.6 L662.0 1197.6 L652.0 1198.5 L642.0 1199.5 L632.0 1200.5 L622.0 1201.5 L612.0 1202.5 L602.0 1203.4 L600.0 1204.4 L543.8 1211.3 L179.7 998.6 L168.0 992.5 L163.1 989.3 L158.5 981.4 L156.5 972.8 L156.5 956.3 L159.2 946.4 L163.0 939.8 Z" fill="none" stroke="#0c0302" stroke-width="56" opacity="0.55" filter="url(#blur12)"/>
    <path d="M170.0 935.9 L186.3 930.5 L190.0 929.6 L200.0 925.6 L210.0 921.7 L220.0 917.8 L230.0 913.9 L240.0 910.0 L250.0 906.2 L260.0 902.4 L270.0 898.6 L280.0 894.8 L290.0 891.0 L300.0 887.3 L310.0 883.6 L320.0 879.9 L330.0 876.2 L340.0 872.6 L350.0 869.0 L360.0 865.4 L370.0 861.8 L380.0 858.3 L390.0 854.7 L400.0 851.2 L410.0 847.7 L420.0 844.3 L430.0 840.8 L440.0 837.4 L450.0 834.0 L460.0 830.7 L470.0 827.3 L480.0 824.0 L490.0 820.7 L500.0 817.4 L510.0 814.1 L520.0 810.9 L530.0 807.7 L540.0 804.5 L550.0 801.3 L560.0 798.1 L570.0 795.0 L580.0 791.9 L590.0 788.8 L600.0 785.7 L610.0 782.7 L620.0 779.6 L630.0 776.6 L640.0 773.6 L650.0 770.7 L660.0 767.7 L670.0 764.8 L680.0 761.9 L690.0 759.0 L700.0 756.2 L710.0 753.3 L720.0 750.5 L730.0 747.7 L740.0 745.0 L750.0 742.2 L760.0 739.5 L770.0 736.8 L780.0 734.1 L790.0 731.4 L800.0 728.8 L810.0 726.1 L820.0 723.5 L830.0 721.0 L840.0 718.4 L850.0 715.8 L860.0 713.3 L870.0 710.8 L880.0 708.3 L890.0 705.9 L900.0 703.4 L910.0 701.0 L920.0 698.6 L930.0 696.2 L940.0 693.9 L950.0 691.5 L960.0 689.2 L970.0 686.9 L980.0 684.7 L990.0 682.4 L1000.0 680.2 L1010.0 677.9 L1020.0 675.7 L1030.0 673.6 L1040.0 671.4 L1050.0 669.3 L1060.0 667.2 L1070.0 665.1 L1080.0 663.0 L1090.0 660.9 L1100.0 658.9 L1110.0 656.9 L1120.0 654.9 L1130.0 652.9 L1140.0 650.9 L1150.0 649.0 L1160.0 647.1 L1170.0 645.2 L1180.0 643.3 L1190.0 641.4 L1200.0 639.6 L1210.0 637.8 L1220.0 636.0 L1230.0 634.2 L1240.0 632.4 L1250.0 630.7 L1260.0 629.0 L1270.0 627.3 L1280.0 625.6 L1290.0 623.9 L1300.0 622.2 L1310.0 620.6 L1320.0 619.0 L1330.0 617.4 L1340.0 615.8 L1350.0 614.3 L1360.0 612.8 L1370.0 611.2 L1380.0 609.8 L1390.0 608.3 L1400.0 606.8 L1410.0 605.4 L1420.0 604.0 L1430.0 602.6 L1440.0 601.2 L1450.0 599.8 L1460.0 598.5 L1470.0 597.1 L1480.0 595.8 L1490.0 594.5 L1500.0 593.3 L1510.0 592.0 L1520.0 590.8 L1530.0 589.6 L1540.0 588.4 L1550.0 587.2 L1560.0 586.1 L1570.0 585.0 L1580.0 583.9 L1590.0 582.8 L1600.0 581.7 L1610.0 580.7 L1620.0 579.7 L1630.0 578.7 L1640.0 577.7 L1650.0 576.8 L1660.0 575.9 L1670.0 575.0 L1680.0 574.1 L1690.0 573.3 L1700.0 572.4 L1710.0 571.6 L1720.0 570.9 L1730.0 570.1 L1740.0 569.4 L1750.0 568.7 L1760.0 568.1 L1770.0 567.4 L1780.0 566.8 L1790.0 566.2 L1800.0 565.7 L1810.0 565.2 L1820.0 564.7 L1830.0 564.2 L1840.0 563.8 L1850.0 563.4 L1860.0 563.0 L1870.0 562.6 L1880.0 562.3 L1890.0 562.0 L1900.0 561.8 L1910.0 561.5 L1920.0 561.3 L1930.0 561.2 L1940.0 561.0 L1950.0 560.9 L1960.0 560.8 L1970.0 560.8 L1980.0 560.8 L1990.0 560.8 L2000.0 560.9 L2010.0 561.0 L2020.0 561.1 L2030.0 561.3 L2040.0 561.5 L2050.0 561.7 L2060.0 561.9 L2070.0 562.2 L2080.0 562.6 L2090.0 562.9 L2100.0 563.3 L2110.0 563.8 L2120.0 564.3 L2130.0 564.8 L2140.0 565.3 L2150.0 565.9 L2160.0 566.5 L2170.0 567.2 L2180.0 567.9 L2190.0 568.6 L2200.0 569.4 L2210.0 570.2 L2220.0 571.1 L2230.0 572.0 L2240.0 572.9 L2250.0 573.9 L2260.0 574.9 L2270.0 576.0 L2280.0 577.1 L2290.0 578.2 L2300.0 579.4 L2310.0 580.6 L2320.0 581.9 L2330.0 583.2 L2340.0 584.6 L2350.0 586.1 L2360.0 587.7 L2370.0 589.4 L2380.0 591.2 L2390.0 593.2 L2400.0 595.3 L2410.0 597.5 L2420.0 600.0 L2430.0 602.6 L2440.0 605.3 L2450.0 608.3 L2460.0 611.5 L2470.0 614.9 L2480.0 618.5 L2490.0 622.4 L2500.0 626.5 L2510.0 630.9 L2520.0 635.6 L2530.0 640.5 L2540.0 645.8 L2550.0 651.4 L2560.0 657.3 L2570.0 663.6 L2580.0 670.8 L2590.0 679.7 L2604.4 696.3 L2735.2 907.3 L2737.0 915.5 L2735.0 922.0 L2730.0 928.0 L2717.0 935.4 L2692.0 940.3 L2682.0 942.1 L2672.0 943.9 L2662.0 945.6 L2652.0 947.4 L2642.0 949.1 L2632.0 950.9 L2622.0 952.6 L2612.0 954.3 L2602.0 956.1 L2592.0 957.8 L2582.0 959.5 L2572.0 961.2 L2562.0 962.9 L2552.0 964.6 L2542.0 966.3 L2532.0 967.9 L2522.0 969.6 L2512.0 971.3 L2502.0 972.9 L2492.0 974.6 L2482.0 976.2 L2472.0 977.8 L2462.0 979.5 L2452.0 981.1 L2442.0 982.7 L2432.0 984.3 L2422.0 985.9 L2412.0 987.5 L2402.0 989.1 L2392.0 990.7 L2382.0 992.2 L2372.0 993.8 L2362.0 995.4 L2352.0 996.9 L2342.0 998.5 L2332.0 1000.0 L2322.0 1001.6 L2312.0 1003.1 L2302.0 1004.6 L2292.0 1006.1 L2282.0 1007.6 L2272.0 1009.1 L2262.0 1010.6 L2252.0 1012.1 L2242.0 1013.6 L2232.0 1015.1 L2222.0 1016.6 L2212.0 1018.1 L2202.0 1019.5 L2192.0 1021.0 L2182.0 1022.4 L2172.0 1023.9 L2162.0 1025.3 L2152.0 1026.8 L2142.0 1028.2 L2132.0 1029.6 L2122.0 1031.1 L2112.0 1032.5 L2102.0 1033.9 L2092.0 1035.3 L2082.0 1036.7 L2072.0 1038.1 L2062.0 1039.5 L2052.0 1040.9 L2042.0 1042.2 L2032.0 1043.6 L2022.0 1045.0 L2012.0 1046.3 L2002.0 1047.7 L1992.0 1049.0 L1982.0 1050.4 L1972.0 1051.7 L1962.0 1053.1 L1952.0 1054.4 L1942.0 1055.7 L1932.0 1057.1 L1922.0 1058.4 L1912.0 1059.7 L1902.0 1061.0 L1892.0 1062.3 L1882.0 1063.6 L1872.0 1064.9 L1862.0 1066.2 L1852.0 1067.5 L1842.0 1068.8 L1832.0 1070.0 L1822.0 1071.3 L1812.0 1072.6 L1802.0 1073.8 L1792.0 1075.1 L1782.0 1076.3 L1772.0 1077.6 L1762.0 1078.8 L1752.0 1080.1 L1742.0 1081.3 L1732.0 1082.6 L1722.0 1083.8 L1712.0 1085.0 L1702.0 1086.2 L1692.0 1087.4 L1682.0 1088.7 L1672.0 1089.9 L1662.0 1091.1 L1652.0 1092.3 L1642.0 1093.5 L1632.0 1094.7 L1622.0 1095.9 L1612.0 1097.0 L1602.0 1098.2 L1592.0 1099.4 L1582.0 1100.6 L1572.0 1101.7 L1562.0 1102.9 L1552.0 1104.1 L1542.0 1105.2 L1532.0 1106.4 L1522.0 1107.5 L1512.0 1108.7 L1502.0 1109.8 L1492.0 1111.0 L1482.0 1112.1 L1472.0 1113.3 L1462.0 1114.4 L1452.0 1115.5 L1442.0 1116.7 L1432.0 1117.8 L1422.0 1118.9 L1412.0 1120.0 L1402.0 1121.1 L1392.0 1122.2 L1382.0 1123.4 L1372.0 1124.5 L1362.0 1125.6 L1352.0 1126.7 L1342.0 1127.8 L1332.0 1128.9 L1322.0 1129.9 L1312.0 1131.0 L1302.0 1132.1 L1292.0 1133.2 L1282.0 1134.3 L1272.0 1135.4 L1262.0 1136.4 L1252.0 1137.5 L1242.0 1138.6 L1232.0 1139.7 L1222.0 1140.7 L1212.0 1141.8 L1202.0 1142.8 L1192.0 1143.9 L1182.0 1145.0 L1172.0 1146.0 L1162.0 1147.1 L1152.0 1148.1 L1142.0 1149.2 L1132.0 1150.2 L1122.0 1151.2 L1112.0 1152.3 L1102.0 1153.3 L1092.0 1154.4 L1082.0 1155.4 L1072.0 1156.4 L1062.0 1157.5 L1052.0 1158.5 L1042.0 1159.5 L1032.0 1160.5 L1022.0 1161.6 L1012.0 1162.6 L1002.0 1163.6 L992.0 1164.6 L982.0 1165.6 L972.0 1166.7 L962.0 1167.7 L952.0 1168.7 L942.0 1169.7 L932.0 1170.7 L922.0 1171.7 L912.0 1172.7 L902.0 1173.7 L892.0 1174.7 L882.0 1175.7 L872.0 1176.7 L862.0 1177.7 L852.0 1178.7 L842.0 1179.7 L832.0 1180.7 L822.0 1181.7 L812.0 1182.7 L802.0 1183.7 L792.0 1184.7 L782.0 1185.7 L772.0 1186.7 L762.0 1187.7 L752.0 1188.7 L742.0 1189.7 L732.0 1190.7 L722.0 1191.6 L712.0 1192.6 L702.0 1193.6 L692.0 1194.6 L682.0 1195.6 L672.0 1196.6 L662.0 1197.6 L652.0 1198.5 L642.0 1199.5 L632.0 1200.5 L622.0 1201.5 L612.0 1202.5 L602.0 1203.4 L600.0 1204.4 L543.8 1211.3 L179.7 998.6 L168.0 992.5 L163.1 989.3 L158.5 981.4 L156.5 972.8 L156.5 956.3 L159.2 946.4 L163.0 939.8 Z" fill="none" stroke="#0c0302" stroke-width="14" opacity="0.6" filter="url(#blur4)"/>
    <path d="M175 996 L543.8 1211.3 L900 1173 L1500 1108" fill="none" stroke="#080202" stroke-width="16" opacity="0.5" filter="url(#blur4)"/>
    <path d="M2300 578 C2420 600 2520 640 2605 698" fill="none" stroke="#080202" stroke-width="22" opacity="0.55" filter="url(#blur4)"/>
    <!-- crease line -->
    <path d="M176 990 C260 952 330 920 400 893 C520 848 620 812 720 782" fill="none" stroke="#0a0302" stroke-width="3.5" opacity="0.85"/>
    <path d="M720 782 C900 748 1100 718 1300 695 C1550 668 1800 640 2000 620 C2150 610 2250 610 2320 614" fill="none" stroke="#0a0302" stroke-width="2.2" opacity="0.55"/>
    
  </g>
  <path d="M170.0 935.9 L186.3 930.5 L190.0 929.6 L200.0 925.6 L210.0 921.7 L220.0 917.8 L230.0 913.9 L240.0 910.0 L250.0 906.2 L260.0 902.4 L270.0 898.6 L280.0 894.8 L290.0 891.0 L300.0 887.3 L310.0 883.6 L320.0 879.9 L330.0 876.2 L340.0 872.6 L350.0 869.0 L360.0 865.4 L370.0 861.8 L380.0 858.3 L390.0 854.7 L400.0 851.2 L410.0 847.7 L420.0 844.3 L430.0 840.8 L440.0 837.4 L450.0 834.0 L460.0 830.7 L470.0 827.3 L480.0 824.0 L490.0 820.7 L500.0 817.4 L510.0 814.1 L520.0 810.9 L530.0 807.7 L540.0 804.5 L550.0 801.3 L560.0 798.1 L570.0 795.0 L580.0 791.9 L590.0 788.8 L600.0 785.7 L610.0 782.7 L620.0 779.6 L630.0 776.6 L640.0 773.6 L650.0 770.7 L660.0 767.7 L670.0 764.8 L680.0 761.9 L690.0 759.0 L700.0 756.2 L710.0 753.3 L720.0 750.5 L730.0 747.7 L740.0 745.0 L750.0 742.2 L760.0 739.5 L770.0 736.8 L780.0 734.1 L790.0 731.4 L800.0 728.8 L810.0 726.1 L820.0 723.5 L830.0 721.0 L840.0 718.4 L850.0 715.8 L860.0 713.3 L870.0 710.8 L880.0 708.3 L890.0 705.9 L900.0 703.4 L910.0 701.0 L920.0 698.6 L930.0 696.2 L940.0 693.9 L950.0 691.5 L960.0 689.2 L970.0 686.9 L980.0 684.7 L990.0 682.4 L1000.0 680.2 L1010.0 677.9 L1020.0 675.7 L1030.0 673.6 L1040.0 671.4 L1050.0 669.3 L1060.0 667.2 L1070.0 665.1 L1080.0 663.0 L1090.0 660.9 L1100.0 658.9 L1110.0 656.9 L1120.0 654.9 L1130.0 652.9 L1140.0 650.9 L1150.0 649.0 L1160.0 647.1 L1170.0 645.2 L1180.0 643.3 L1190.0 641.4 L1200.0 639.6 L1210.0 637.8 L1220.0 636.0 L1230.0 634.2 L1240.0 632.4 L1250.0 630.7 L1260.0 629.0 L1270.0 627.3 L1280.0 625.6 L1290.0 623.9 L1300.0 622.2 L1310.0 620.6 L1320.0 619.0 L1330.0 617.4 L1340.0 615.8 L1350.0 614.3 L1360.0 612.8 L1370.0 611.2 L1380.0 609.8 L1390.0 608.3 L1400.0 606.8 L1410.0 605.4 L1420.0 604.0 L1430.0 602.6 L1440.0 601.2 L1450.0 599.8 L1460.0 598.5 L1470.0 597.1 L1480.0 595.8 L1490.0 594.5 L1500.0 593.3 L1510.0 592.0 L1520.0 590.8 L1530.0 589.6 L1540.0 588.4 L1550.0 587.2 L1560.0 586.1 L1570.0 585.0 L1580.0 583.9 L1590.0 582.8 L1600.0 581.7 L1610.0 580.7 L1620.0 579.7 L1630.0 578.7 L1640.0 577.7 L1650.0 576.8 L1660.0 575.9 L1670.0 575.0 L1680.0 574.1 L1690.0 573.3 L1700.0 572.4 L1710.0 571.6 L1720.0 570.9 L1730.0 570.1 L1740.0 569.4 L1750.0 568.7 L1760.0 568.1 L1770.0 567.4 L1780.0 566.8 L1790.0 566.2 L1800.0 565.7 L1810.0 565.2 L1820.0 564.7 L1830.0 564.2 L1840.0 563.8 L1850.0 563.4 L1860.0 563.0 L1870.0 562.6 L1880.0 562.3 L1890.0 562.0 L1900.0 561.8 L1910.0 561.5 L1920.0 561.3 L1930.0 561.2 L1940.0 561.0 L1950.0 560.9 L1960.0 560.8 L1970.0 560.8 L1980.0 560.8 L1990.0 560.8 L2000.0 560.9 L2010.0 561.0 L2020.0 561.1 L2030.0 561.3 L2040.0 561.5 L2050.0 561.7 L2060.0 561.9 L2070.0 562.2 L2080.0 562.6 L2090.0 562.9 L2100.0 563.3 L2110.0 563.8 L2120.0 564.3 L2130.0 564.8 L2140.0 565.3 L2150.0 565.9 L2160.0 566.5 L2170.0 567.2 L2180.0 567.9 L2190.0 568.6 L2200.0 569.4 L2210.0 570.2 L2220.0 571.1 L2230.0 572.0 L2240.0 572.9 L2250.0 573.9 L2260.0 574.9 L2270.0 576.0 L2280.0 577.1 L2290.0 578.2 L2300.0 579.4 L2310.0 580.6 L2320.0 581.9 L2330.0 583.2 L2340.0 584.6 L2350.0 586.1 L2360.0 587.7 L2370.0 589.4 L2380.0 591.2 L2390.0 593.2 L2400.0 595.3 L2410.0 597.5 L2420.0 600.0 L2430.0 602.6 L2440.0 605.3 L2450.0 608.3 L2460.0 611.5 L2470.0 614.9 L2480.0 618.5 L2490.0 622.4 L2500.0 626.5 L2510.0 630.9 L2520.0 635.6 L2530.0 640.5 L2540.0 645.8 L2550.0 651.4 L2560.0 657.3 L2570.0 663.6 L2580.0 670.8 L2590.0 679.7 L2604.4 696.3 L2735.2 907.3 L2737.0 915.5 L2735.0 922.0 L2730.0 928.0 L2717.0 935.4 L2692.0 940.3 L2682.0 942.1 L2672.0 943.9 L2662.0 945.6 L2652.0 947.4 L2642.0 949.1 L2632.0 950.9 L2622.0 952.6 L2612.0 954.3 L2602.0 956.1 L2592.0 957.8 L2582.0 959.5 L2572.0 961.2 L2562.0 962.9 L2552.0 964.6 L2542.0 966.3 L2532.0 967.9 L2522.0 969.6 L2512.0 971.3 L2502.0 972.9 L2492.0 974.6 L2482.0 976.2 L2472.0 977.8 L2462.0 979.5 L2452.0 981.1 L2442.0 982.7 L2432.0 984.3 L2422.0 985.9 L2412.0 987.5 L2402.0 989.1 L2392.0 990.7 L2382.0 992.2 L2372.0 993.8 L2362.0 995.4 L2352.0 996.9 L2342.0 998.5 L2332.0 1000.0 L2322.0 1001.6 L2312.0 1003.1 L2302.0 1004.6 L2292.0 1006.1 L2282.0 1007.6 L2272.0 1009.1 L2262.0 1010.6 L2252.0 1012.1 L2242.0 1013.6 L2232.0 1015.1 L2222.0 1016.6 L2212.0 1018.1 L2202.0 1019.5 L2192.0 1021.0 L2182.0 1022.4 L2172.0 1023.9 L2162.0 1025.3 L2152.0 1026.8 L2142.0 1028.2 L2132.0 1029.6 L2122.0 1031.1 L2112.0 1032.5 L2102.0 1033.9 L2092.0 1035.3 L2082.0 1036.7 L2072.0 1038.1 L2062.0 1039.5 L2052.0 1040.9 L2042.0 1042.2 L2032.0 1043.6 L2022.0 1045.0 L2012.0 1046.3 L2002.0 1047.7 L1992.0 1049.0 L1982.0 1050.4 L1972.0 1051.7 L1962.0 1053.1 L1952.0 1054.4 L1942.0 1055.7 L1932.0 1057.1 L1922.0 1058.4 L1912.0 1059.7 L1902.0 1061.0 L1892.0 1062.3 L1882.0 1063.6 L1872.0 1064.9 L1862.0 1066.2 L1852.0 1067.5 L1842.0 1068.8 L1832.0 1070.0 L1822.0 1071.3 L1812.0 1072.6 L1802.0 1073.8 L1792.0 1075.1 L1782.0 1076.3 L1772.0 1077.6 L1762.0 1078.8 L1752.0 1080.1 L1742.0 1081.3 L1732.0 1082.6 L1722.0 1083.8 L1712.0 1085.0 L1702.0 1086.2 L1692.0 1087.4 L1682.0 1088.7 L1672.0 1089.9 L1662.0 1091.1 L1652.0 1092.3 L1642.0 1093.5 L1632.0 1094.7 L1622.0 1095.9 L1612.0 1097.0 L1602.0 1098.2 L1592.0 1099.4 L1582.0 1100.6 L1572.0 1101.7 L1562.0 1102.9 L1552.0 1104.1 L1542.0 1105.2 L1532.0 1106.4 L1522.0 1107.5 L1512.0 1108.7 L1502.0 1109.8 L1492.0 1111.0 L1482.0 1112.1 L1472.0 1113.3 L1462.0 1114.4 L1452.0 1115.5 L1442.0 1116.7 L1432.0 1117.8 L1422.0 1118.9 L1412.0 1120.0 L1402.0 1121.1 L1392.0 1122.2 L1382.0 1123.4 L1372.0 1124.5 L1362.0 1125.6 L1352.0 1126.7 L1342.0 1127.8 L1332.0 1128.9 L1322.0 1129.9 L1312.0 1131.0 L1302.0 1132.1 L1292.0 1133.2 L1282.0 1134.3 L1272.0 1135.4 L1262.0 1136.4 L1252.0 1137.5 L1242.0 1138.6 L1232.0 1139.7 L1222.0 1140.7 L1212.0 1141.8 L1202.0 1142.8 L1192.0 1143.9 L1182.0 1145.0 L1172.0 1146.0 L1162.0 1147.1 L1152.0 1148.1 L1142.0 1149.2 L1132.0 1150.2 L1122.0 1151.2 L1112.0 1152.3 L1102.0 1153.3 L1092.0 1154.4 L1082.0 1155.4 L1072.0 1156.4 L1062.0 1157.5 L1052.0 1158.5 L1042.0 1159.5 L1032.0 1160.5 L1022.0 1161.6 L1012.0 1162.6 L1002.0 1163.6 L992.0 1164.6 L982.0 1165.6 L972.0 1166.7 L962.0 1167.7 L952.0 1168.7 L942.0 1169.7 L932.0 1170.7 L922.0 1171.7 L912.0 1172.7 L902.0 1173.7 L892.0 1174.7 L882.0 1175.7 L872.0 1176.7 L862.0 1177.7 L852.0 1178.7 L842.0 1179.7 L832.0 1180.7 L822.0 1181.7 L812.0 1182.7 L802.0 1183.7 L792.0 1184.7 L782.0 1185.7 L772.0 1186.7 L762.0 1187.7 L752.0 1188.7 L742.0 1189.7 L732.0 1190.7 L722.0 1191.6 L712.0 1192.6 L702.0 1193.6 L692.0 1194.6 L682.0 1195.6 L672.0 1196.6 L662.0 1197.6 L652.0 1198.5 L642.0 1199.5 L632.0 1200.5 L622.0 1201.5 L612.0 1202.5 L602.0 1203.4 L600.0 1204.4 L543.8 1211.3 L179.7 998.6 L168.0 992.5 L163.1 989.3 L158.5 981.4 L156.5 972.8 L156.5 956.3 L159.2 946.4 L163.0 939.8 Z" fill="none" stroke="#0a0302" stroke-width="2"/>
  <!-- blue edge -->
  <path d="M2599.5 704 L2729 912" stroke="#2a4a18" stroke-width="2.5" opacity="0.55"/>
  <path d="M2604 699 L2734 909" stroke="#1a2ad0" stroke-width="4.5"/>
</svg>

<!-- TOOLTIP -->
<div class="a" style="left:1032px;top:234px;width:292px;height:38px;background:#fcfce4;border:2px solid #111"></div>
<div class="t" style="left:1037px;top:243px;font-size:22px;color:#303030;letter-spacing:0.67px">Flip the board upside down</div>

<!-- STATUS BAR -->
<div class="t" style="left:6px;top:1776px;font-size:22px;color:#2a2a2a;letter-spacing:0.25px">Press F1 for help</div>


<div class="a" style="left:2176px;top:1768px;width:50px;height:32px;border-left:2px solid #8a8a90;border-top:2px solid #8a8a90"></div>
<div class="a" style="left:2232px;top:1768px;width:139px;height:32px;border-left:2px solid #8a8a90;border-top:2px solid #8a8a90"></div>
<div class="a" style="left:2379px;top:1768px;width:138px;height:32px;border-left:2px solid #8a8a90;border-top:2px solid #8a8a90"></div>
<div class="a" style="left:2524px;top:1768px;width:139px;height:32px;border-left:2px solid #8a8a90;border-top:2px solid #8a8a90"></div>
<div class="a" style="left:2670px;top:1768px;width:52px;height:32px;border-left:2px solid #8a8a90;border-top:2px solid #8a8a90"></div>
<div class="a" style="left:2728px;top:1768px;width:60px;height:32px;border-left:2px solid #8a8a90;border-top:2px solid #8a8a90"></div>
<div class="a" style="left:2794px;top:1768px;width:48px;height:32px;border-left:2px solid #8a8a90;border-top:2px solid #8a8a90"></div>
<div class="t" style="left:2185px;top:1776px;font-size:21px;color:#333">cm</div>
<div class="t" style="left:2240px;top:1776px;font-size:21px;color:#333">X: 21.9</div>
<div class="t" style="left:2386px;top:1776px;font-size:21px;color:#333">Y: 0.0</div>
<div class="t" style="left:2531px;top:1776px;font-size:21px;color:#333">Z: 35.2</div>
<svg style="left:0;top:0" width="2880" height="1800" viewBox="0 0 2880 1800">
  <path d="M2856 1800 L2878 1777 M2864 1800 L2878 1785 M2872 1800 L2878 1793" stroke="#888" stroke-width="2"/>
</svg>
<svg style="left:0;top:0" width="2880" height="1800" viewBox="0 0 2880 1800">
  <path d="M0 1788 L0 1800 L12 1800 A12 12 0 0 1 0 1788 Z" fill="#000"/>
  <path d="M2880 1788 L2880 1800 L2868 1800 A12 12 0 0 0 2880 1788 Z" fill="#000"/>
</svg>
</body></html>
